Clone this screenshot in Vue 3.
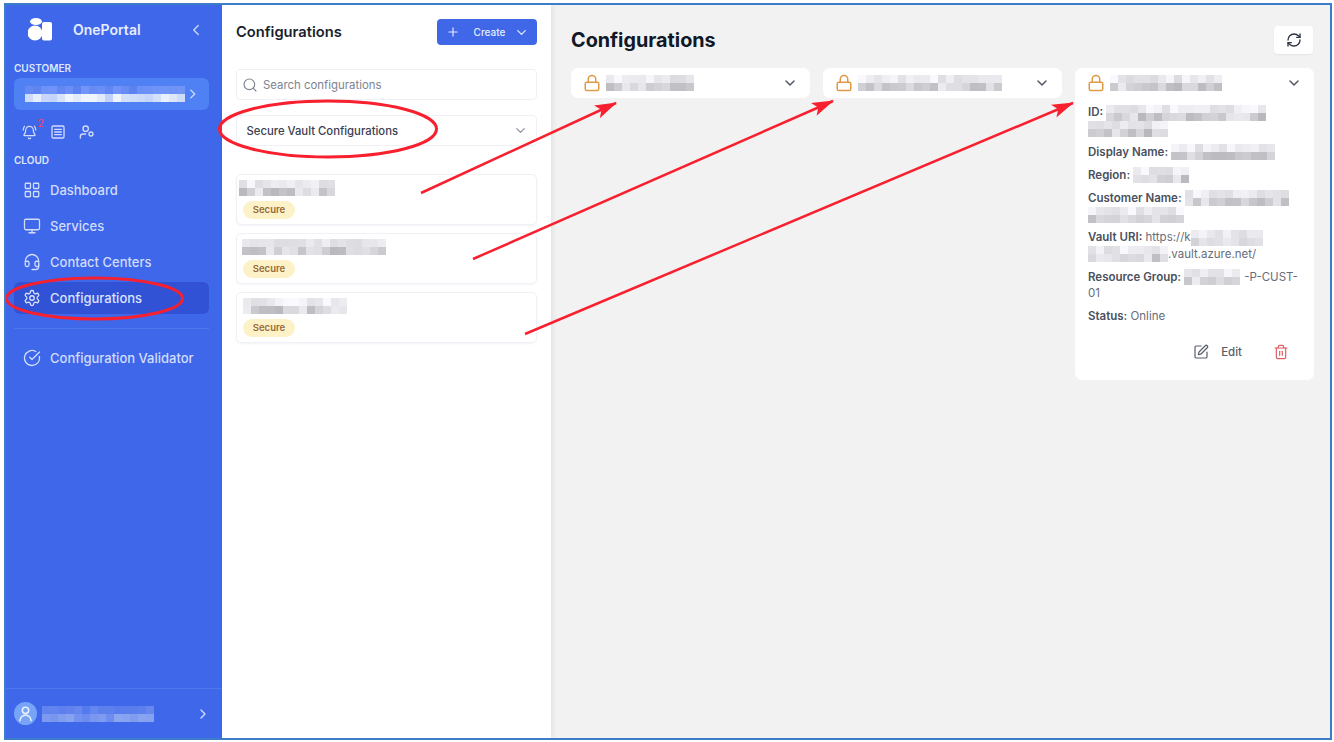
<script setup>
import { h } from 'vue'

const ICONS = {
  bell: ['M10.268 21a2 2 0 0 0 3.464 0', 'M22 8c0-2.3-.8-4.3-2-6', 'M3.262 15.326A1 1 0 0 0 4 17h16a1 1 0 0 0 .74-1.673C19.41 13.956 18 12.499 18 8A6 6 0 0 0 6 8c0 4.499-1.411 5.956-2.738 7.326', 'M4 2C2.8 3.7 2 5.7 2 8'],
  list: ['M5 3h14a2 2 0 0 1 2 2v14a2 2 0 0 1-2 2H5a2 2 0 0 1-2-2V5a2 2 0 0 1 2-2z', 'M7 8h10', 'M7 12h10', 'M7 16h10'],
  usercog: ['M10 3a4 4 0 1 0 0 8 4 4 0 0 0 0-8z', 'M10 15H6a4 4 0 0 0-4 4v2', 'M18 12a3 3 0 1 0 0 6 3 3 0 0 0 0-6z'],
  grid: ['M4 3h5a1 1 0 0 1 1 1v5a1 1 0 0 1-1 1H4a1 1 0 0 1-1-1V4a1 1 0 0 1 1-1z', 'M15 3h5a1 1 0 0 1 1 1v5a1 1 0 0 1-1 1h-5a1 1 0 0 1-1-1V4a1 1 0 0 1 1-1z', 'M15 14h5a1 1 0 0 1 1 1v5a1 1 0 0 1-1 1h-5a1 1 0 0 1-1-1v-5a1 1 0 0 1 1-1z', 'M4 14h5a1 1 0 0 1 1 1v5a1 1 0 0 1-1 1H4a1 1 0 0 1-1-1v-5a1 1 0 0 1 1-1z'],
  monitor: ['M4 3h16a2 2 0 0 1 2 2v10a2 2 0 0 1-2 2H4a2 2 0 0 1-2-2V5a2 2 0 0 1 2-2z', 'M8 21h8', 'M12 17v4'],
  headset: ['M3 11h3a2 2 0 0 1 2 2v3a2 2 0 0 1-2 2H5a2 2 0 0 1-2-2v-5Zm0 0a9 9 0 1 1 18 0m0 0v5a2 2 0 0 1-2 2h-1a2 2 0 0 1-2-2v-3a2 2 0 0 1 2-2h3Z', 'M21 16v2a4 4 0 0 1-4 4h-5'],
  gear: ['M12.22 2h-.44a2 2 0 0 0-2 2v.18a2 2 0 0 1-1 1.73l-.43.25a2 2 0 0 1-2 0l-.15-.08a2 2 0 0 0-2.73.73l-.22.38a2 2 0 0 0 .73 2.73l.15.1a2 2 0 0 1 1 1.72v.51a2 2 0 0 1-1 1.74l-.15.09a2 2 0 0 0-.73 2.73l.22.38a2 2 0 0 0 2.73.73l.15-.08a2 2 0 0 1 2 0l.43.25a2 2 0 0 1 1 1.73V20a2 2 0 0 0 2 2h.44a2 2 0 0 0 2-2v-.18a2 2 0 0 1 1-1.73l.43-.25a2 2 0 0 1 2 0l.15.08a2 2 0 0 0 2.73-.73l.22-.39a2 2 0 0 0-.73-2.73l-.15-.08a2 2 0 0 1-1-1.74v-.5a2 2 0 0 1 1-1.74l.15-.09a2 2 0 0 0 .73-2.73l-.22-.38a2 2 0 0 0-2.73-.73l-.15.08a2 2 0 0 1-2 0l-.43-.25a2 2 0 0 1-1-1.73V4a2 2 0 0 0-2-2z', 'M12 9a3 3 0 1 0 0 6 3 3 0 0 0 0-6z'],
  check: ['M21.801 10A10 10 0 1 1 17 3.335', 'm9 11 3 3L22 4'],
  lock: ['M5 11h14a2 2 0 0 1 2 2v7a2 2 0 0 1-2 2H5a2 2 0 0 1-2-2v-7a2 2 0 0 1 2-2z', 'M7 11V7a5 5 0 0 1 10 0v4'],
  refresh: ['M3 12a9 9 0 0 1 9-9 9.75 9.75 0 0 1 6.74 2.74L21 8', 'M21 3v5h-5', 'M21 12a9 9 0 0 1-9 9 9.75 9.75 0 0 1-6.74-2.74L3 16', 'M8 16H3v5'],
  edit: ['M12 3H5a2 2 0 0 0-2 2v14a2 2 0 0 0 2 2h14a2 2 0 0 0 2-2v-7', 'M18.375 2.625a1 1 0 0 1 3 3l-9.013 9.014a2 2 0 0 1-.853.505l-2.873.84a.5.5 0 0 1-.62-.62l.84-2.873a2 2 0 0 1 .506-.852z'],
  trash: ['M3 6h18', 'M19 6v14c0 1-1 2-2 2H7c-1 0-2-1-2-2V6', 'M8 6V4c0-1 1-2 2-2h4c1 0 2 1 2 2v2', 'M10 11v6', 'M14 11v6'],
  search: ['M11 3a8 8 0 1 0 0 16 8 8 0 0 0 0-16z', 'm21 21-4.3-4.3'],
  plus: ['M5 12h14', 'M12 5v14'],
  down: ['m6 9 6 6 6-6'],
  left: ['m15 18-6-6 6-6'],
  right: ['m9 18 6-6-6-6'],
  user: ['M12 4a4 4 0 1 0 0 8 4 4 0 0 0 0-8z', 'M5 21a7 7 0 0 1 14 0'],
}

const Icon = (props) =>
  h('svg', {
    viewBox: '0 0 24 24', width: props.size, height: props.size, fill: 'none',
    stroke: 'currentColor', 'stroke-width': props.weight || 2,
    'stroke-linecap': 'round', 'stroke-linejoin': 'round',
  }, ICONS[props.name].map((d) => h('path', { d })))
Icon.props = ['name', 'size', 'weight']

// Redacted text in the reference appears as a pixel mosaic
const TONES = {
  gray: (top, n) => { const v = top ? 250 - n * 30 : 236 - n * 52; return `rgb(${v},${v},${v + 4})` },
  blue: (top, n) => top ? `rgb(${92 + n * 24},${130 + n * 20},${240 + n * 8})` : `rgb(${190 + n * 50},${208 + n * 38},${250})`,
  dim: (top, n) => top ? `rgb(${84 + n * 20},${120 + n * 16},${238})` : `rgb(${108 + n * 36},${140 + n * 30},${240})`,
}
const Mosaic = (props) => {
  const { cols, seed, tone = 'gray', rows = 2, cell = 8 } = props
  let s = seed * 7919 + 13
  const cells = []
  for (let i = 0; i < cols * rows; i++) {
    s = (s * 16807) % 2147483647
    const n = (s % 100) / 100
    cells.push(h('span', { style: { background: TONES[tone](i < cols && rows > 1, n) } }))
  }
  return h('span', {
    class: 'mosaic',
    style: { gridTemplateColumns: `repeat(${cols}, ${cell}px)`, gridAutoRows: `${cell}px` },
  }, cells)
}
Mosaic.props = ['cols', 'seed', 'tone', 'rows', 'cell']

const nav = [
  { label: 'Dashboard', icon: 'grid' },
  { label: 'Services', icon: 'monitor' },
  { label: 'Contact Centers', icon: 'headset' },
  { label: 'Configurations', icon: 'gear', active: true },
]
const items = [
  { cols: 12, seed: 3, indent: 3 },
  { cols: 18, seed: 5, indent: 6 },
  { cols: 13, seed: 8, indent: 7 },
]
const vaults = [{ cols: 11, seed: 11 }, { cols: 18, seed: 17 }]
</script>

<template>
  <div class="frame">
    <aside class="sidebar">
      <div class="brand">
        <svg class="logo" viewBox="0 0 24 24" width="24" height="24" fill="#fff">
          <ellipse cx="8" cy="3.500" rx="6" ry="3.500" />
          <circle cx="7" cy="15" r="7.500" />
          <rect x="14" y="4" width="10" height="18.500" rx="2" />
        </svg>
        <span class="brand-name">OnePortal</span>
        <Icon name="left" :size="18" :weight="1.7" class="brand-back" />
      </div>
      <div class="section-label">CUSTOMER</div>
      <div class="customer">
        <Mosaic :cols="20" :seed="21" tone="blue" />
        <Icon name="right" :size="16" class="customer-go" />
      </div>
      <div class="tools">
        <span class="bell">
          <Icon name="bell" :size="15" />
          <b class="bell-count">2</b>
        </span>
        <Icon name="list" :size="16" />
        <Icon name="usercog" :size="16" />
      </div>
      <div class="section-label cloud">CLOUD</div>
      <nav class="nav">
        <a v-for="n in nav" :key="n.label" class="nav-item" :class="{ active: n.active }">
          <Icon :name="n.icon" :size="18" :weight="1.7" />
          <span>{{ n.label }}</span>
        </a>
      </nav>
      <div class="nav-divider"></div>
      <a class="nav-item validator">
        <Icon name="check" :size="18" :weight="1.7" />
        <span>Configuration Validator</span>
      </a>
      <div class="account">
        <span class="avatar"><Icon name="user" :size="19" /></span>
        <Mosaic :cols="14" :seed="31" tone="dim" />
        <Icon name="right" :size="16" class="account-go" />
      </div>
    </aside>

    <section class="panel">
      <header class="panel-head">
        <h2>Configurations</h2>
        <button class="create">
          <Icon name="plus" :size="14" />
          <span class="create-label">Create</span>
          <Icon name="down" :size="15" />
        </button>
      </header>
      <label class="search">
        <Icon name="search" :size="16" :weight="1.7" />
        <span>Search configurations</span>
      </label>
      <div class="select">
        <span>Secure Vault Configurations</span>
        <Icon name="down" :size="15" />
      </div>
      <ul class="items">
        <li v-for="it in items" :key="it.seed" class="item">
          <Mosaic :cols="it.cols" :seed="it.seed" :style="{ marginLeft: it.indent - 7 + 'px' }" />
          <span class="badge">Secure</span>
        </li>
      </ul>
    </section>

    <main class="main">
      <header class="main-head">
        <h1>Configurations</h1>
        <button class="refresh"><Icon name="refresh" :size="16" /></button>
      </header>
      <div class="vaults">
        <article v-for="v in vaults" :key="v.seed" class="vault">
          <div class="vault-head">
            <Icon name="lock" :size="18" class="lock" />
            <Mosaic :cols="v.cols" :seed="v.seed" />
            <Icon name="down" :size="16" :weight="2.2" class="vault-down" />
          </div>
        </article>
        <article class="vault">
          <div class="vault-head">
            <Icon name="lock" :size="18" class="lock" />
            <Mosaic :cols="14" :seed="23" />
            <Icon name="down" :size="16" :weight="2.2" class="vault-down" />
          </div>
          <div class="details">
            <p><b>ID:</b> <Mosaic :cols="20" :seed="41" /> <Mosaic :cols="10" :seed="42" /></p>
            <p><b>Display Name:</b> <Mosaic :cols="13" :seed="43" /></p>
            <p><b>Region:</b> <Mosaic :cols="7" :seed="44" /></p>
            <p><b>Customer Name:</b> <Mosaic :cols="13" :seed="45" /> <Mosaic :cols="12" :seed="46" /></p>
            <p><b>Vault URI:</b> https://k<Mosaic :cols="9" :seed="47" /> <Mosaic :cols="10" :seed="48" />.vault.azure.net/</p>
            <p><b>Resource Group:</b> <Mosaic :cols="7" :seed="49" class="rg-mask" />-P-CUST-01</p>
            <p><b>Status:</b> Online</p>
          </div>
          <div class="actions">
            <Icon name="edit" :size="16" :weight="1.8" />
            <span class="edit-label">Edit</span>
            <Icon name="trash" :size="16" :weight="1.8" class="trash" />
          </div>
        </article>
      </div>
    </main>

    <svg class="annotations" viewBox="0 0 1334 742" width="1334" height="742">
      <defs>
        <marker id="head" markerUnits="userSpaceOnUse" viewBox="0 0 22 14" refX="21" refY="7" markerWidth="22" markerHeight="14" orient="auto">
          <path d="M0 0 L22 7 L0 14 L5 7 Z" fill="#f8202e" />
        </marker>
      </defs>
      <ellipse cx="94.500" cy="298.500" rx="88" ry="20.500" />
      <ellipse cx="328" cy="129" rx="108.500" ry="28" />
      <line x1="421" y1="193" x2="616" y2="103" marker-end="url(#head)" />
      <line x1="473" y1="259" x2="833" y2="101" marker-end="url(#head)" />
      <line x1="525" y1="334" x2="1073" y2="103" marker-end="url(#head)" />
    </svg>
  </div>
</template>

<style>
html, body { margin: 0; background: #fff; }
</style>

<style scoped>
.frame {
  position: relative;
  display: flex;
  box-sizing: border-box;
  width: 1328px;
  height: 737px;
  margin: 3px 0 0 4px;
  border: 2px solid #3d7cc9;
  font-family: Inter, "Noto Sans", sans-serif;
  overflow: hidden;
}
.mosaic {
  display: inline-grid;
  vertical-align: middle;
  flex: none;
  filter: blur(0.4px);
}

/* Sidebar */
.sidebar {
  width: 216px;
  flex: none;
  display: flex;
  flex-direction: column;
  background: #3e67ea;
  color: #d3dcfb;
}
.brand {
  height: 50px;
  flex: none;
  display: flex;
  align-items: center;
  padding: 0 17px 0 22px;
}
.brand-name {
  margin: 0 0 2px 21px;
  font-size: 14px;
  font-weight: 600;
  color: #e8edfe;
}
.brand-back { margin-left: auto; }
.section-label {
  margin: 6px 8px 0;
  font-size: 10px;
  line-height: 14px;
  font-weight: 600;
  color: #dfe6fd;
}
.customer {
  height: 32px;
  margin: 3px 13px 0 8px;
  padding: 0 8.500px 0 11px;
  display: flex;
  align-items: center;
  border-radius: 6px;
  background: #4f80f4;
}
.customer-go { margin-left: auto; }
.tools {
  height: 20px;
  margin: 12px 0 0 15.500px;
  display: flex;
  align-items: center;
  gap: 13px;
}
.bell { position: relative; display: flex; }
.bell-count {
  position: absolute;
  top: -8px;
  left: 16px;
  font-size: 10px;
  font-weight: 500;
  color: #e8455e;
}
.cloud { margin-top: 11px; }
.nav {
  margin-top: 7px;
  display: flex;
  flex-direction: column;
  gap: 4px;
}
.nav-item {
  height: 32px;
  margin: 0 13px 0 8px;
  padding-left: 9px;
  display: flex;
  align-items: center;
  gap: 9px;
  border-radius: 6px;
  font-size: 13px;
  font-weight: 500;
}
.nav-item.active { background: #3252d6; color: #dbe3fd; }
.validator { margin-top: 13px; }
.nav-divider {
  height: 1px;
  margin: 14px 13px 0 8px;
  background: #5077ee;
}
.account {
  margin-top: auto;
  height: 49px;
  flex: none;
  display: flex;
  align-items: center;
  gap: 5px;
  padding: 0 11.500px 0 8px;
  border-top: 1px solid #5077ee;
}
.avatar {
  width: 23px;
  height: 23px;
  display: flex;
  align-items: center;
  justify-content: center;
  border-radius: 50%;
  background: #78a4f8;
  color: #e8effe;
}
.account-go { margin-left: auto; }

/* List panel */
.panel {
  width: 329px;
  flex: none;
  box-sizing: border-box;
  padding: 14px 14px 0;
  background: #fff;
  box-shadow: 2px 0 5px rgba(0, 0, 0, 0.07);
  z-index: 1;
}
.panel-head {
  display: flex;
  align-items: center;
  justify-content: space-between;
}
.panel-head h2 {
  margin: 0 0 1px;
  font-size: 14.700px;
  font-weight: 600;
  color: #1a1f2c;
}
.create {
  width: 100px;
  height: 26px;
  padding: 0 8px 0 9px;
  display: flex;
  align-items: center;
  justify-content: space-between;
  border: 0;
  border-radius: 4px;
  background: #3f67e8;
  color: #e6ecfd;
  font: 500 10px Inter, sans-serif;
}
.create-label { margin-left: 5px; }
.search, .select {
  display: flex;
  align-items: center;
  box-sizing: border-box;
  height: 31px;
  border: 1px solid #f0f1f6;
  border-radius: 4px;
}
.search {
  margin-top: 24px;
  padding-left: 4.500px;
  gap: 5.500px;
  font-size: 11.400px;
  color: #7d8390;
}
.select {
  margin-top: 15px;
  padding: 0 8px 0 9.500px;
  justify-content: space-between;
  font-size: 11.300px;
  font-weight: 500;
  color: #3a4052;
}
.select svg { color: #8e93a0; }
.items {
  margin: 28px 0 0;
  padding: 0;
  list-style: none;
  display: flex;
  flex-direction: column;
  gap: 8px;
}
.item {
  box-sizing: border-box;
  height: 51px;
  padding: 5px 6px;
  display: flex;
  flex-direction: column;
  align-items: flex-start;
  gap: 5px;
  border: 1px solid #f0f1f7;
  border-radius: 5px;
  box-shadow: 0 1px 2px rgba(30, 40, 90, 0.05);
}
.badge {
  width: 52px;
  height: 18px;
  line-height: 18px;
  text-align: center;
  border-radius: 9px;
  background: #fdf1c7;
  color: #966a38;
  font-size: 9.500px;
  font-weight: 600;
}

/* Main */
.main {
  flex: 1;
  min-width: 0;
  box-sizing: border-box;
  padding: 21px 16px 0 20px;
  background: #f2f2f2;
}
.main-head {
  display: flex;
  align-items: center;
  justify-content: space-between;
}
.main-head h1 {
  margin: 0;
  font-size: 19.800px;
  font-weight: 700;
  color: #111827;
}
.refresh {
  width: 39px;
  height: 28px;
  margin-right: 1px;
  padding: 0;
  display: flex;
  align-items: center;
  justify-content: center;
  border: 0;
  border-radius: 4px;
  background: #fff;
  color: #2d3342;
  box-shadow: 0 1px 2px rgba(0, 0, 0, 0.06);
}
.vaults {
  margin-top: 14px;
  display: grid;
  grid-template-columns: repeat(3, 1fr);
  gap: 13px;
  align-items: start;
}
.vault {
  background: #fff;
  border-radius: 7px;
}
.vault-head {
  height: 30px;
  padding: 0 12px 0 12px;
  display: flex;
  align-items: center;
  gap: 5px;
}
.lock { color: #e09a45; }
.vault-down { margin-left: auto; color: #4f5563; }
.details {
  padding: 6px 13px 0;
  font-size: 11.500px;
  line-height: 16.500px;
  color: #676d7a;
}
.details p { margin: 0 0 6.500px; }
.details b { font-weight: 600; color: #4a505e; }
.details .mosaic { margin: -1px 0; }
.details .rg-mask { margin-right: 4px; }
.actions {
  height: 22px;
  margin-top: 16px;
  padding: 0 25px 17px 0;
  display: flex;
  align-items: center;
  justify-content: flex-end;
  color: #585e6b;
  font-size: 11.500px;
  font-weight: 500;
}
.edit-label { margin: 0 31px 0 12px; }
.trash { color: #e05f63; }

/* Hand-drawn annotations over the screenshot */
.annotations {
  position: absolute;
  left: -6px;
  top: -5px;
  z-index: 5;
  pointer-events: none;
}
.annotations ellipse, .annotations line {
  fill: none;
  stroke: #f8202e;
  stroke-width: 2.500;
}
.annotations ellipse { stroke-width: 3; }
</style>
